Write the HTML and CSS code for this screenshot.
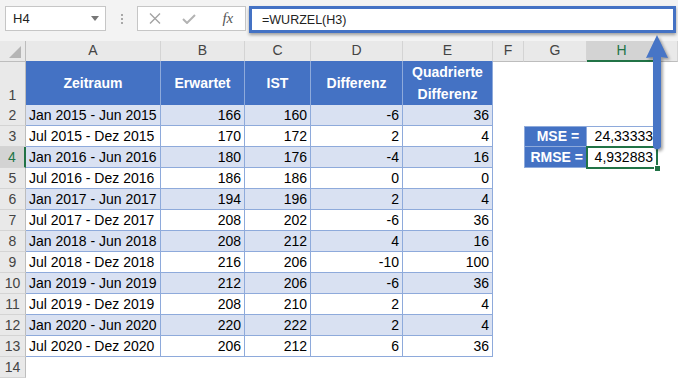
FILE: index.html
```html
<!doctype html>
<html lang="de">
<head>
  <meta charset="utf-8">
  <title>RMSE - Excel</title>
  <link rel="stylesheet" href="styles.css">
</head>
<body>
<div class="app">

  <div class="toolbar">
    <div class="namebox">H4<span class="caret"></span></div>
    <div class="grip"><span></span><span></span><span></span></div>
    <div class="fxbox">
      <span class="fxbtn">
        <svg width="12" height="11" viewBox="0 0 12 11"><path d="M1 0.5 L11 10.5 M11 0.5 L1 10.5" stroke="#a3a3a3" stroke-width="1.4" fill="none"/></svg>
      </span>
      <span class="fxbtn">
        <svg width="14" height="10" viewBox="0 0 14 10"><path d="M1 5 L5 9 L13 1" stroke="#b3b3b3" stroke-width="2" fill="none"/></svg>
      </span>
      <span class="fxbtn fx">fx</span>
    </div>
    <div class="formula">=WURZEL(H3)</div>
  </div>

  <div class="sheet">
    <div class="row colhead">
      <div class="corner"><span class="tri"></span></div>
      <div class="ch">A</div>
      <div class="ch">B</div>
      <div class="ch">C</div>
      <div class="ch">D</div>
      <div class="ch">E</div>
      <div class="ch">F</div>
      <div class="ch">G</div>
      <div class="ch active">H</div>
      <div class="ch"></div>
    </div>

    <div class="row tall">
      <div class="rh">1</div>
      <div class="c hd">Zeitraum</div>
      <div class="c hd">Erwartet</div>
      <div class="c hd">IST</div>
      <div class="c hd">Differenz</div>
      <div class="c hd">Quadrierte<br>Differenz</div>
      <div></div><div></div><div></div><div></div>
    </div>

    <div class="row band">
      <div class="rh">2</div>
      <div class="c">Jan 2015 - Jun 2015</div>
      <div class="c n">166</div><div class="c n">160</div><div class="c n">-6</div><div class="c n">36</div>
      <div></div><div></div><div></div><div></div>
    </div>
    <div class="row">
      <div class="rh">3</div>
      <div class="c">Jul 2015 - Dez 2015</div>
      <div class="c n">170</div><div class="c n">172</div><div class="c n">2</div><div class="c n">4</div>
      <div></div>
      <div class="m lbl first">MSE =&nbsp;</div>
      <div class="m val first">24,33333</div>
      <div></div>
    </div>
    <div class="row band">
      <div class="rh active">4</div>
      <div class="c">Jan 2016 - Jun 2016</div>
      <div class="c n">180</div><div class="c n">176</div><div class="c n">-4</div><div class="c n">16</div>
      <div></div>
      <div class="m lbl">RMSE =</div>
      <div class="m val sel">4,932883<span class="handle"></span></div>
      <div></div>
    </div>
    <div class="row">
      <div class="rh">5</div>
      <div class="c">Jul 2016 - Dez 2016</div>
      <div class="c n">186</div><div class="c n">186</div><div class="c n">0</div><div class="c n">0</div>
      <div></div><div></div><div></div><div></div>
    </div>
    <div class="row band">
      <div class="rh">6</div>
      <div class="c">Jan 2017 - Jun 2017</div>
      <div class="c n">194</div><div class="c n">196</div><div class="c n">2</div><div class="c n">4</div>
      <div></div><div></div><div></div><div></div>
    </div>
    <div class="row">
      <div class="rh">7</div>
      <div class="c">Jul 2017 - Dez 2017</div>
      <div class="c n">208</div><div class="c n">202</div><div class="c n">-6</div><div class="c n">36</div>
      <div></div><div></div><div></div><div></div>
    </div>
    <div class="row band">
      <div class="rh">8</div>
      <div class="c">Jan 2018 - Jun 2018</div>
      <div class="c n">208</div><div class="c n">212</div><div class="c n">4</div><div class="c n">16</div>
      <div></div><div></div><div></div><div></div>
    </div>
    <div class="row">
      <div class="rh">9</div>
      <div class="c">Jul 2018 - Dez 2018</div>
      <div class="c n">216</div><div class="c n">206</div><div class="c n">-10</div><div class="c n">100</div>
      <div></div><div></div><div></div><div></div>
    </div>
    <div class="row band">
      <div class="rh">10</div>
      <div class="c">Jan 2019 - Jun 2019</div>
      <div class="c n">212</div><div class="c n">206</div><div class="c n">-6</div><div class="c n">36</div>
      <div></div><div></div><div></div><div></div>
    </div>
    <div class="row">
      <div class="rh">11</div>
      <div class="c">Jul 2019 - Dez 2019</div>
      <div class="c n">208</div><div class="c n">210</div><div class="c n">2</div><div class="c n">4</div>
      <div></div><div></div><div></div><div></div>
    </div>
    <div class="row band">
      <div class="rh">12</div>
      <div class="c">Jan 2020 - Jun 2020</div>
      <div class="c n">220</div><div class="c n">222</div><div class="c n">2</div><div class="c n">4</div>
      <div></div><div></div><div></div><div></div>
    </div>
    <div class="row">
      <div class="rh">13</div>
      <div class="c">Jul 2020 - Dez 2020</div>
      <div class="c n">206</div><div class="c n">212</div><div class="c n">6</div><div class="c n">36</div>
      <div></div><div></div><div></div><div></div>
    </div>
    <div class="row">
      <div class="rh">14</div>
      <div></div><div></div><div></div><div></div><div></div><div></div><div></div><div></div><div></div>
    </div>
  </div>

  <!-- callout arrow from H4 up to the formula bar -->
  <svg class="arrow" width="36" height="126" viewBox="0 0 36 126">
    <path d="M17 5 L28 28 L21 27 L21 117 Q17 122 13 117 L13 27 L6 28 Z" fill="#4775c6"/>
  </svg>

</div>
</body>
</html>
```

FILE: styles.css
```css
body {
  margin: 0;
  font-family: "Liberation Sans", Arial, sans-serif;
  font-size: 14px;
  color: #000;
  background: #fff;
}
.app {
  position: relative;
  width: 678px;
  height: 379px;
  overflow: hidden;
}

/* formula bar */
.toolbar {
  height: 41px;
  box-sizing: border-box;
  padding: 6px 0 0 5px;
  display: flex;
  align-items: flex-start;
  background: #f3f3f3;
}
.namebox {
  width: 101px;
  height: 25px;
  box-sizing: border-box;
  padding: 0 6px 0 7px;
  display: flex;
  align-items: center;
  justify-content: space-between;
  border: 1px solid #c6c6c6;
  background: #fff;
  font-size: 13px;
  color: #222;
}
.caret {
  width: 0;
  height: 0;
  border-left: 4px solid transparent;
  border-right: 4px solid transparent;
  border-top: 5px solid #777;
}
.grip {
  width: 2px;
  margin: 8px 14px 0 15px;
  display: flex;
  flex-direction: column;
  gap: 2px;
}
.grip span {
  width: 2px;
  height: 2px;
  background: #a8a8a8;
}
.fxbox {
  width: 109px;
  height: 25px;
  box-sizing: border-box;
  display: flex;
  align-items: center;
  border: 1px solid #c6c6c6;
  background: #fff;
}
.fxbtn {
  width: 36px;
  display: flex;
  justify-content: center;
  align-items: center;
}
.fx {
  font-family: "Liberation Serif", serif;
  font-style: italic;
  font-size: 15px;
  color: #555;
  padding-left: 4px;
}
.formula {
  width: 427px;
  height: 27px;
  margin-left: 3px;
  padding-left: 10px;
  box-sizing: border-box;
  display: flex;
  align-items: center;
  border: 3px solid #4472c4;
  background: #fff;
  box-shadow: 0 2px 3px rgba(0, 0, 0, 0.35);
  font-size: 12.5px;
  color: #222;
}

/* sheet grid */
.row {
  display: grid;
  grid-template-columns: 26px 135px 84px 66px 92px 90px 31px 63px 70px 21px;
  height: 21px;
  line-height: 19px;
}
.row > div {
  box-sizing: border-box;
  white-space: nowrap;
}
.colhead {
  height: 20px;
  background: #e9e9e9;
}
.tall {
  height: 44px;
}
.corner {
  position: relative;
  border-right: 1px solid #bdbdbd;
  border-bottom: 1px solid #bdbdbd;
}
.tri {
  position: absolute;
  right: 4px;
  bottom: 3px;
  width: 0;
  height: 0;
  border-left: 12px solid transparent;
  border-bottom: 12px solid #b5b5b5;
}
.ch {
  text-align: center;
  color: #444;
  border-right: 1px solid #d4d4d4;
  border-bottom: 1px solid #bdbdbd;
}
.ch.active {
  background: #d3d3d3;
  color: #217346;
  border-bottom: 2px solid #217346;
}
.rh {
  display: flex;
  align-items: flex-end;
  justify-content: center;
  background: #e9e9e9;
  color: #444;
  border-right: 1px solid #bdbdbd;
  border-bottom: 1px solid #d4d4d4;
}
.rh.active {
  background: #d3d3d3;
  color: #217346;
  border-right: 2px solid #217346;
}
.c {
  padding: 0 3px;
  display: flex;
  align-items: flex-end;
  border-right: 1px solid #8eaadb;
  border-bottom: 1px solid #8eaadb;
}
.c.n {
  justify-content: flex-end;
}
.band .c {
  background: #d9e1f2;
}
.c.hd {
  align-items: center;
  justify-content: center;
  text-align: center;
  line-height: 22px;
  background: #4472c4;
  color: #fff;
  font-weight: bold;
}

/* MSE / RMSE block */
.m {
  padding: 0 3px;
  display: flex;
  align-items: flex-end;
  justify-content: flex-end;
  border-right: 1px solid #8eaadb;
  border-bottom: 1px solid #8eaadb;
}
.m.first {
  border-top: 1px solid #8eaadb;
}
.lbl {
  border-left: 1px solid #8eaadb;
  background: #4472c4;
  color: #fff;
  font-weight: bold;
}
.sel {
  position: relative;
}
.sel::after {
  content: "";
  position: absolute;
  top: -1px;
  left: -1px;
  right: -2px;
  bottom: -2px;
  border: 2px solid #217346;
}
.handle {
  position: absolute;
  right: -5px;
  bottom: -5px;
  width: 5px;
  height: 5px;
  background: #217346;
  border: 1px solid #fff;
  z-index: 1;
}

.arrow {
  position: absolute;
  left: 640px;
  top: 30px;
  filter: drop-shadow(2px 2px 1.5px rgba(0, 0, 0, 0.35));
}
```
